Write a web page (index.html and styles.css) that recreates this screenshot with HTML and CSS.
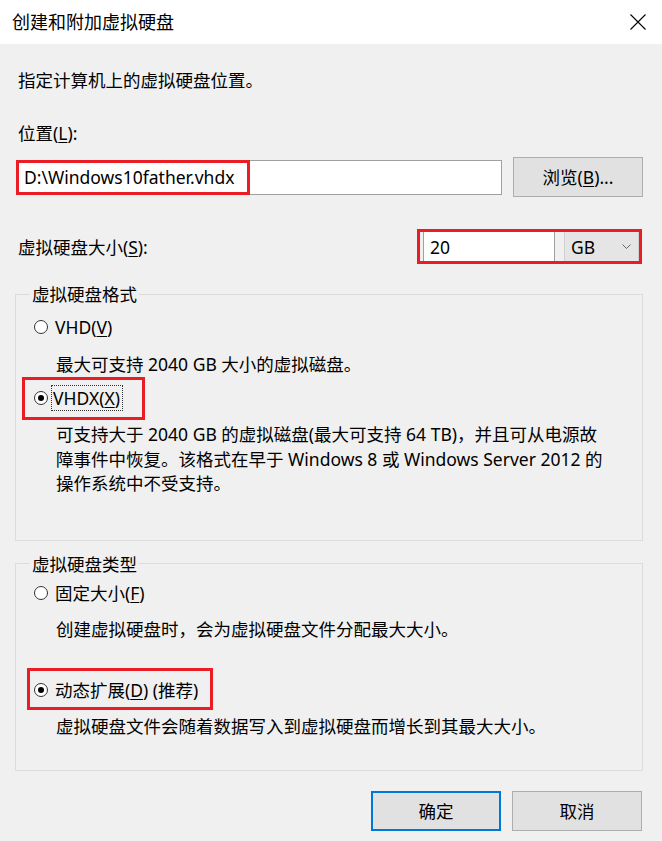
FILE: index.html
```html
<!DOCTYPE html>
<html lang="zh-CN">
<head>
<meta charset="utf-8">
<title>创建和附加虚拟硬盘</title>
<link rel="stylesheet" href="styles.css">
</head>
<body>
<div class="window">
  <div class="titlebar">
    <span class="title">创建和附加虚拟硬盘</span>
    <svg class="close" width="16" height="16" viewBox="0 0 16 16"><path d="M0.5 0.5 L15.5 15.5 M15.5 0.5 L0.5 15.5" stroke="#000" stroke-width="1.1" fill="none"/></svg>
  </div>
  <div class="main">
    <p class="intro">指定计算机上的虚拟硬盘位置。</p>
    <p class="field-label">位置(<u>L</u>):</p>
    <div class="loc-row">
      <div class="textbox loc">D:\Windows10father.vhdx<span class="mark mark-loc"></span></div>
      <button class="btn">浏览(<u>B</u>)...</button>
    </div>
    <div class="size-row">
      <span class="size-label">虚拟硬盘大小(<u>S</u>):</span>
      <div class="size-ctrls">
        <div class="textbox size">20</div>
        <div class="combo"><span>GB</span><svg class="chev" width="9" height="6" viewBox="0 0 9 6"><path d="M0.5 0.5 L4.5 4.5 L8.5 0.5" stroke="#666" stroke-width="1" fill="none"/></svg></div>
        <span class="mark mark-size"></span>
      </div>
    </div>
    <fieldset class="group g1">
      <legend>虚拟硬盘格式</legend>
      <div class="radio r-vhd"><span class="circle"></span><span>VHD(<u>V</u>)</span></div>
      <p class="desc d-vhd">最大可支持 2040 GB 大小的虚拟磁盘。</p>
      <div class="radio r-vhdx"><span class="circle on"></span><span class="focus">VHDX(<u>X</u>)</span><span class="mark mark-vhdx"></span></div>
      <p class="desc d-vhdx">可支持大于 2040 GB 的虚拟磁盘(最大可支持 64 TB)，并且可从电源故<br>障事件中恢复。该格式在早于 Windows 8 或 Windows Server 2012 的<br>操作系统中不受支持。</p>
    </fieldset>
    <fieldset class="group g2">
      <legend>虚拟硬盘类型</legend>
      <div class="radio r-fixed"><span class="circle"></span><span>固定大小(<u>F</u>)</span></div>
      <p class="desc d-fixed">创建虚拟硬盘时，会为虚拟硬盘文件分配最大大小。</p>
      <div class="radio r-dyn"><span class="circle on"></span><span>动态扩展(<u>D</u>) (推荐)</span><span class="mark mark-dyn"></span></div>
      <p class="desc d-dyn">虚拟硬盘文件会随着数据写入到虚拟硬盘而增长到其最大大小。</p>
    </fieldset>
    <div class="actions">
      <button class="btn primary">确定</button>
      <button class="btn">取消</button>
    </div>
  </div>
</div>
</body>
</html>
```
FILE: styles.css
```css
* { box-sizing: border-box; }
html, body { margin: 0; padding: 0; }
body {
  width: 662px;
  height: 841px;
  overflow: hidden;
  background: #f0f0f0;
  font-family: "Noto Sans", "Noto Sans CJK SC", sans-serif;
  font-size: 17.5px;
  line-height: 24px;
  color: #000;
}
p { margin: 0; }
u { text-decoration: underline; text-underline-offset: 2px; text-decoration-thickness: 1px; }

.titlebar {
  height: 44px;
  background: #fff;
  display: flex;
  align-items: center;
  justify-content: space-between;
  padding: 0 16px 0 12px;
}
.title { font-size: 18px; }
.close { display: block; margin-top: -1px; }

.main { padding: 0 19px 0 16px; }

.intro { margin: 24px 0 0 2px; }
.field-label { margin: 29px 0 0 2px; }

.loc-row {
  margin-top: 12px;
  display: flex;
  align-items: center;
  gap: 11px;
  height: 40px;
}
.textbox {
  position: relative;
  background: #fff;
  border: 1px solid #a0a0a0;
  display: flex;
  align-items: center;
}
.textbox.loc {
  flex: 1;
  height: 35px;
  padding-left: 7px;
}
.btn {
  font: inherit;
  color: #000;
  background: #e1e1e1;
  border: 1px solid #adadad;
  width: 130px;
  height: 40px;
  padding: 0;
  margin: 0;
}
.btn.primary { border: 2px solid #0078d7; }

.mark {
  position: absolute;
  border: 3px solid #ea1c24;
  pointer-events: none;
}
.mark-loc { left: -1px; top: -1px; bottom: -1px; width: 234px; }

.size-row {
  margin-top: 34px;
  display: flex;
  align-items: center;
  justify-content: space-between;
  padding-left: 2px;
}
.size-ctrls {
  position: relative;
  display: flex;
  gap: 9px;
  margin-right: 4px;
  height: 31px;
}
.textbox.size {
  width: 132px;
  height: 31px;
  padding-left: 6px;
}
.combo {
  width: 75px;
  height: 31px;
  background: #e5e5e5;
  border: 1px solid #d0d0d0;
  display: flex;
  align-items: center;
  justify-content: space-between;
  padding: 0 7px 0 6px;
}
.chev { display: block; }
.mark-size { left: -6px; right: -3px; top: -2px; bottom: -2px; }

.group {
  margin: 0 0 0 -1px;
  border: 1px solid #dcdcdc;
  padding: 0 14px;
  min-width: 0;
}
.group legend {
  padding: 0 2px;
  line-height: 24px;
}
.g1 { margin-top: 20px; padding-top: 9px; padding-bottom: 44px; }
.g2 { margin-top: 11px; padding-top: 5px; padding-bottom: 32px; }

.radio {
  position: relative;
  display: flex;
  align-items: center;
  margin-left: 4px;
  line-height: 24px;
}
.circle {
  width: 14px;
  height: 14px;
  border-radius: 50%;
  border: 1px solid #333;
  background: #fff;
  margin-right: 7px;
  position: relative;
  flex: none;
}
.circle.on::after {
  content: "";
  position: absolute;
  left: 3px; top: 3px;
  width: 6px; height: 6px;
  border-radius: 50%;
  background: #000;
}
.focus { outline: 1px dotted #333; outline-offset: 0; padding: 0 2px 0 1px; margin-left: -3px; }

.desc { margin-left: 26px; }
.d-vhd { margin-top: 13px; }
.r-vhdx { margin-top: 10px; }
.d-vhdx { margin-top: 12px; line-height: 24.5px; white-space: nowrap; }
.d-fixed { margin-top: 12px; }
.r-dyn { margin-top: 37px; }
.d-dyn { margin-top: 12px; }

.mark-vhdx { left: -12px; width: 123px; top: -9px; bottom: -10px; }
.mark-dyn { left: -7px; width: 186px; top: -10px; bottom: -8px; }

.actions {
  margin-top: 20px;
  display: flex;
  justify-content: flex-end;
  gap: 11px;
  margin-right: 1px;
}
```
